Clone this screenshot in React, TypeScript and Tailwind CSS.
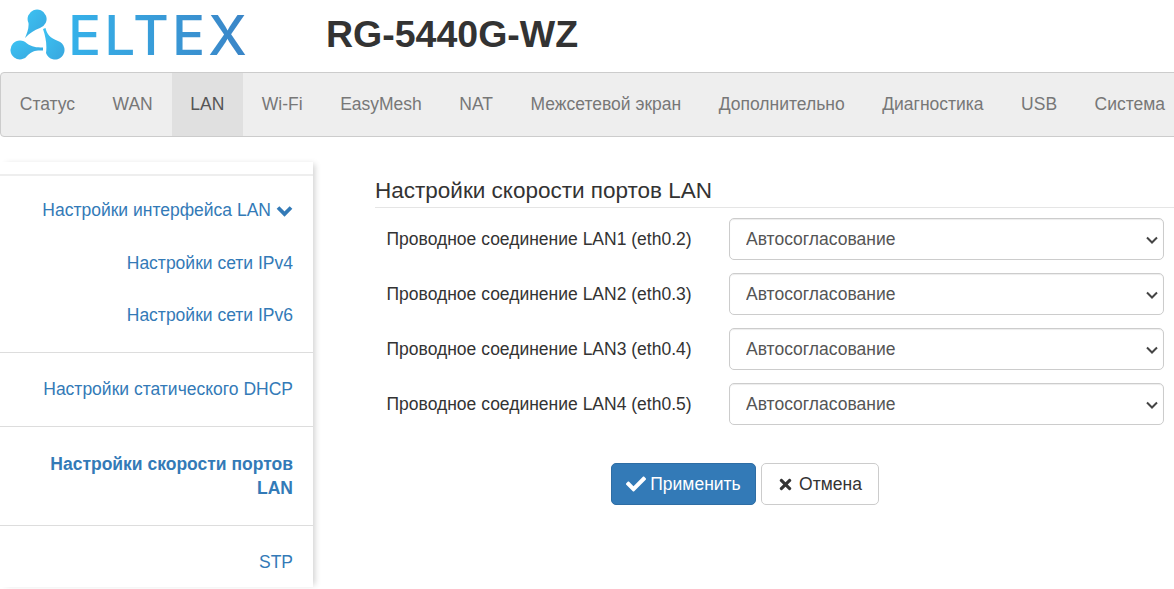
import { FC } from "react";
import { FaCheck, FaTimes } from "react-icons/fa";

const tabs = ["Статус", "WAN", "LAN", "Wi-Fi", "EasyMesh", "NAT", "Межсетевой экран", "Дополнительно", "Диагностика", "USB", "Система"];
const ports = ["LAN1 (eth0.2)", "LAN2 (eth0.3)", "LAN3 (eth0.4)", "LAN4 (eth0.5)"];

const Logo: FC = () => (
  <div className="flex items-center">
    <svg width="56" height="54" viewBox="10 8 56 54" className="shrink-0">
      <defs>
        <linearGradient id="lg" x1="0" y1="0" x2="1" y2="1">
          <stop offset="0" stopColor="#3dc3f3" />
          <stop offset="1" stopColor="#38a6de" />
        </linearGradient>
      </defs>
      <path fill="url(#lg)" d="M25 38 C27 33 29 29 28.5 23 A9.5 9.5 0 1 1 40 28 C34 30 30 33 25 38Z" />
      <path fill="url(#lg)" d="M43 47.5 L43 50.5 C36 50 32 51 28 55 A9.5 9.5 0 1 1 27 43.5 C32 47 36 47.5 43 47.5Z" />
      <path fill="url(#lg)" d="M43 29 L45.5 28 C47 34 50 38 58 41 A9.5 9.5 0 1 1 46 53 C47 45 46 38 43 29Z" />
    </svg>
    <span className="ml-[2px] bg-gradient-to-r from-[#35b2ea] to-[#3a84c6] bg-clip-text font-['Inter',sans-serif] text-[55px] leading-none font-medium tracking-[3px] text-transparent">
      ELTEX
    </span>
  </div>
);

const Chevron: FC = () => (
  <svg width="17" height="12" viewBox="0 0 17 12" className="ml-[5px] inline align-[-1px]">
    <path d="M2 2.5 L8.5 9 L15 2.5" fill="none" stroke="#337ab7" strokeWidth="3.8" />
  </svg>
);

const SideItem: FC<{ label: string; active?: boolean; chevron?: boolean; className?: string }> = ({ label, active, chevron, className }) => (
  <a className={`block text-right text-[17.5px] leading-[24px] text-[#337ab7] ${active ? "font-bold" : ""} ${className ?? ""}`}>
    {label}
    {chevron ? <Chevron /> : null}
  </a>
);

export default function App() {
  return (
    <div className="h-[589px] w-[1174px] overflow-hidden bg-white font-['Liberation_Sans',Arial,sans-serif] text-[17.5px] text-[#333]">
      <header className="flex h-[72px] items-center pb-[2px] pl-[10px]">
        <div className="w-[316px]">
          <Logo />
        </div>
        <h1 className="text-[37.5px] leading-none font-bold text-[#333]">RG-5440G-WZ</h1>
      </header>

      <nav className="flex h-[65px] w-[1180px] overflow-hidden rounded-[4px] border border-[#ccc] bg-[#eee]">
        {tabs.map((t) => (
          <a
            key={t}
            className={`flex shrink-0 items-center px-[18.75px] whitespace-nowrap ${t === "LAN" ? "bg-[#e0e0e0] text-[#555]" : "text-[#777]"}`}
          >
            {t}
          </a>
        ))}
      </nav>

      <div className="mt-[25px] flex">
        <aside className="h-[425px] w-[313px] shrink-0 shadow-[4px_0_6px_-2px_rgba(0,0,0,0.18)]">
          <div className="mt-[12px] border-t-2 border-[#eee] pt-[22px] pr-[20px] pb-[25px]">
            <SideItem label="Настройки интерфейса LAN" chevron />
            <SideItem label="Настройки сети IPv4" className="mt-[29px]" />
            <SideItem label="Настройки сети IPv6" className="mt-[28px]" />
          </div>
          <div className="border-t border-[#ddd] pt-[24px] pr-[20px] pb-[25px]">
            <SideItem label="Настройки статического DHCP" />
          </div>
          <div className="border-t border-[#ddd] pt-[25px] pr-[20px] pb-[25px] pl-[40px]">
            <SideItem label="Настройки скорости портов LAN" active />
          </div>
          <div className="border-t border-[#ddd] pt-[24px] pr-[20px]">
            <SideItem label="STP" />
          </div>
        </aside>

        <main className="ml-[62px] flex-1 pt-[16px]">
          <h2 className="h-[30px] border-b border-[#e5e5e5] text-[22.5px] leading-[26px] text-[#333]">
            Настройки скорости портов LAN
          </h2>
          <div className="mt-[10px] flex flex-col gap-[13px] pr-[10px]">
            {ports.map((p) => (
              <div key={p} className="flex items-center">
                <label className="w-[354px] shrink-0 pl-[11.5px] text-[#333]">Проводное соединение {p}</label>
                <div className="relative">
                  <select
                    defaultValue="auto"
                    className="h-[42px] w-[435px] appearance-none rounded-[5px] border border-[#ccc] bg-white pl-[16px] text-[17.5px] text-[#555] shadow-[inset_0_1px_1px_rgba(0,0,0,0.075)]"
                  >
                    <option value="auto">Автосогласование</option>
                  </select>
                  <svg width="12" height="8" viewBox="0 0 12 8" className="pointer-events-none absolute top-[18px] right-[6px]">
                    <path d="M1 1.5 L6 6.5 L11 1.5" fill="none" stroke="#444" strokeWidth="2" />
                  </svg>
                </div>
              </div>
            ))}
          </div>
          <div className="mt-[38px] ml-[236px] flex gap-[5px]">
            <button className="flex h-[42px] w-[145px] items-center justify-center rounded-[5px] border border-[#2e6da4] bg-[#337ab7] text-[17.5px] text-white">
              <FaCheck className="mr-[4px] h-[20px] w-[20px]" />
              Применить
            </button>
            <button className="flex h-[42px] w-[118px] items-center justify-center rounded-[5px] border border-[#ccc] bg-white text-[17.5px] text-[#333]">
              <FaTimes className="mr-[6px] h-[17px] w-[15px]" />
              Отмена
            </button>
          </div>
        </main>
      </div>
    </div>
  );
}
